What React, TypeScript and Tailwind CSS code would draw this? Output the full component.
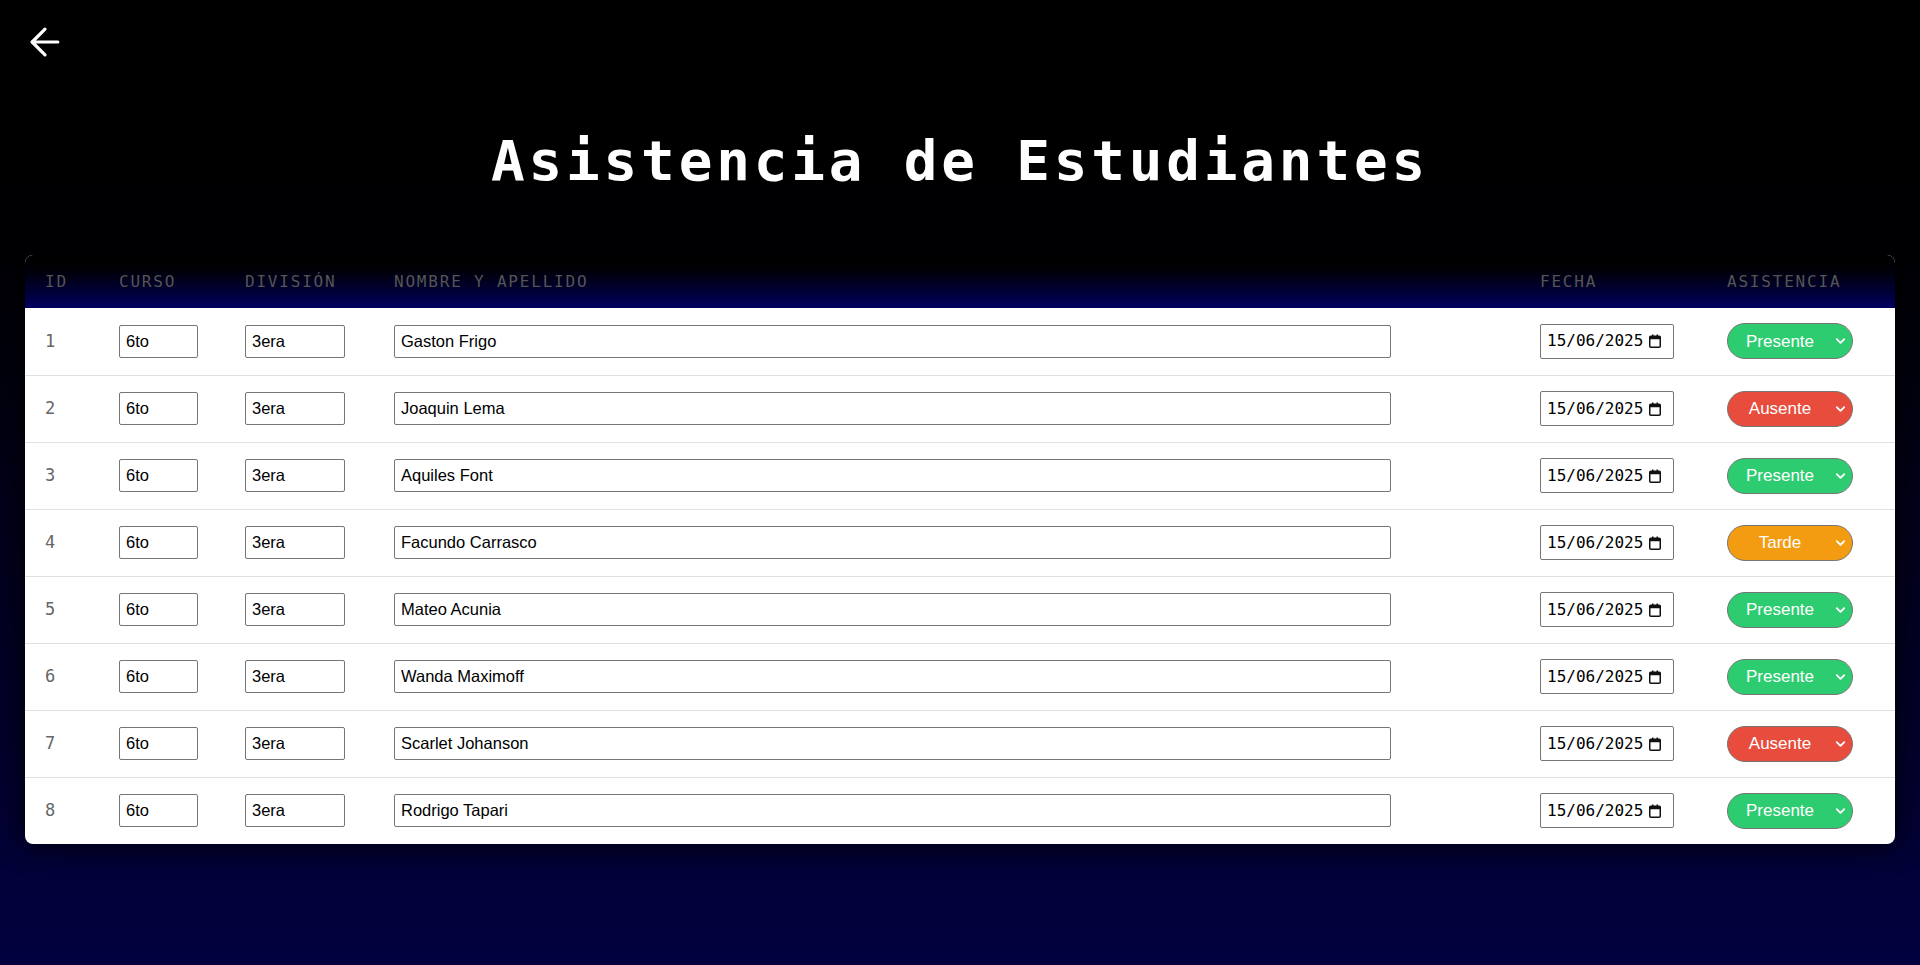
import { ArrowLeft, ChevronDown } from "lucide-react";

type Estado = "Presente" | "Ausente" | "Tarde";

interface Alumno {
  id: number;
  curso: string;
  division: string;
  nombre: string;
  fecha: string;
  asistencia: Estado;
}

const alumnos: Alumno[] = [
  { id: 1, curso: "6to", division: "3era", nombre: "Gaston Frigo", fecha: "15/06/2025", asistencia: "Presente" },
  { id: 2, curso: "6to", division: "3era", nombre: "Joaquin Lema", fecha: "15/06/2025", asistencia: "Ausente" },
  { id: 3, curso: "6to", division: "3era", nombre: "Aquiles Font", fecha: "15/06/2025", asistencia: "Presente" },
  { id: 4, curso: "6to", division: "3era", nombre: "Facundo Carrasco", fecha: "15/06/2025", asistencia: "Tarde" },
  { id: 5, curso: "6to", division: "3era", nombre: "Mateo Acunia", fecha: "15/06/2025", asistencia: "Presente" },
  { id: 6, curso: "6to", division: "3era", nombre: "Wanda Maximoff", fecha: "15/06/2025", asistencia: "Presente" },
  { id: 7, curso: "6to", division: "3era", nombre: "Scarlet Johanson", fecha: "15/06/2025", asistencia: "Ausente" },
  { id: 8, curso: "6to", division: "3era", nombre: "Rodrigo Tapari", fecha: "15/06/2025", asistencia: "Presente" },
];

const colores: Record<Estado, string> = {
  Presente: "bg-[#2ecc71]",
  Ausente: "bg-[#e74c3c]",
  Tarde: "bg-[#f39c12]",
};

const inputBase =
  "h-[33px] border border-[#767676] rounded-[2px] px-[6px] text-[16.5px] text-black bg-white font-['Liberation_Sans',Arial,sans-serif] outline-none";

const CalendarIcon = () => (
  <svg width="12" height="14" viewBox="0 0 12 14" className="shrink-0">
    <rect x="3" y="0.5" width="1.5" height="2.5" fill="#111" />
    <rect x="7.5" y="0.5" width="1.5" height="2.5" fill="#111" />
    <rect x="0.75" y="2.25" width="10.5" height="11" rx="1" fill="none" stroke="#111" strokeWidth="1.5" />
    <rect x="0.75" y="2.25" width="10.5" height="3" fill="#111" />
  </svg>
);

const App = () => {
  return (
    <div className="min-h-screen bg-gradient-to-b from-[#000000] via-[#020118] to-[#020140] px-[25px] pt-5 pb-10">
      <button className="-ml-0.5 text-white">
        <ArrowLeft size={44} strokeWidth={1.75} />
      </button>

      <h1 className="mt-[57px] mb-[61px] text-center text-white font-bold text-[56px] leading-[67px] tracking-[3.8px] font-['DejaVu_Sans_Mono',monospace]">
        Asistencia de Estudiantes
      </h1>

      <div className="rounded-lg overflow-hidden bg-white shadow-[0_0_30px_rgba(0,0,0,0.9)]">
        <table className="w-full table-fixed border-collapse">
          <thead>
            <tr className="h-[53px] bg-gradient-to-b from-[#000000] to-[#00005f]">
              {[
                ["ID", "w-[74px]"],
                ["CURSO", "w-[126px]"],
                ["DIVISIÓN", "w-[149px]"],
                ["NOMBRE Y APELLIDO", "w-[1146px]"],
                ["FECHA", "w-[187px]"],
                ["ASISTENCIA", "w-[188px]"],
              ].map(([label, w]) => (
                <th
                  key={label}
                  className={`${w} pl-5 text-left font-normal text-[16px] tracking-[1.8px] text-[#555] font-['DejaVu_Sans_Mono',monospace]`}
                >
                  {label}
                </th>
              ))}
            </tr>
          </thead>
          <tbody>
            {alumnos.map((a, i) => (
              <tr
                key={a.id}
                className={`h-[67px] ${i < alumnos.length - 1 ? "border-b border-[#e0e0e0]" : ""}`}
              >
                <td className="pl-5 text-[17px] text-[#666] font-['DejaVu_Sans_Mono',monospace]">
                  {a.id}
                </td>
                <td className="pl-5">
                  <input defaultValue={a.curso} className={`${inputBase} w-[79px]`} />
                </td>
                <td className="pl-5">
                  <input defaultValue={a.division} className={`${inputBase} w-[100px]`} />
                </td>
                <td className="pl-5">
                  <input defaultValue={a.nombre} className={`${inputBase} w-[997px]`} />
                </td>
                <td className="pl-5">
                  <div className="w-[134px] h-[35px] border border-[#767676] rounded-[2px] flex items-center gap-[6px] pl-[6px] text-[16px] text-black font-['DejaVu_Sans_Mono',monospace]">
                    <span>{a.fecha}</span>
                    <CalendarIcon />
                  </div>
                </td>
                <td className="pl-5">
                  <div className="relative w-[126px] h-[36px]">
                    <select
                      defaultValue={a.asistencia}
                      className={`${colores[a.asistencia]} appearance-none w-full h-full rounded-full border border-[#767676] pr-6 pl-1 text-white text-[17px] [text-align-last:center] font-['Liberation_Sans',Arial,sans-serif] outline-none`}
                    >
                      <option>Presente</option>
                      <option>Ausente</option>
                      <option>Tarde</option>
                    </select>
                    <ChevronDown
                      size={15}
                      strokeWidth={3}
                      className="absolute right-[5px] top-1/2 -translate-y-1/2 text-white pointer-events-none"
                    />
                  </div>
                </td>
              </tr>
            ))}
          </tbody>
        </table>
      </div>
    </div>
  );
};

export default App;
